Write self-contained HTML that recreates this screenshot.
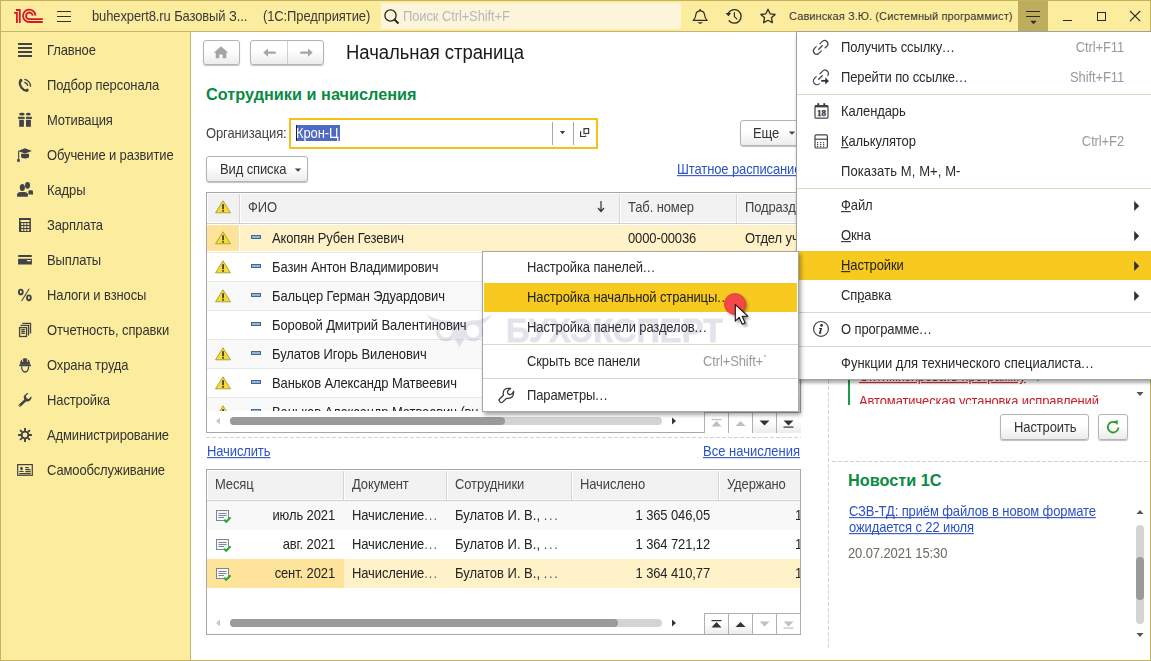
<!DOCTYPE html>
<html><head><meta charset="utf-8">
<style>
*{box-sizing:border-box;margin:0;padding:0}
html,body{width:1151px;height:661px;overflow:hidden;background:#fff;font-family:"Liberation Sans",sans-serif;font-size:13px;color:#333}
.a{position:absolute}
.t{position:absolute;white-space:nowrap;line-height:15px;font-size:13px;letter-spacing:-0.12px;transform:scaleY(1.09);transform-origin:0 12px}
.link{color:#2d52c4;text-decoration:underline;text-decoration-skip-ink:none}
.btn{position:absolute;border:1px solid #b4b4b4;border-radius:3px;background:linear-gradient(#fff 0,#fff 40%,#ececec 100%);box-shadow:0 1px 1px rgba(0,0,0,.25)}
u{text-decoration:underline}
</style></head><body>
<div class="a" style="left:0;top:0;width:1151px;height:661px;overflow:hidden;background:#fff">
<!-- HEADER -->
<div class="a" style="left:0;top:0;width:1151px;height:31px;background:#fbec9e"></div>
<div class="a" style="left:0;top:31px;width:1151px;height:1px;background:#c5b56b"></div>
<svg class="a" style="left:0;top:0" width="60" height="31" viewBox="0 0 60 31">
 <g fill="none" stroke="#d7182a" stroke-width="1.8">
  <path d="M14 12.9H16.9V23"/>
  <path d="M16 10H19.8V23"/>
  <path d="M35.4 15.6A6.2 6.2 0 1 0 29.45 22H42.8"/>
  <path d="M32.6 15.6A3.3 3.3 0 1 0 29.45 19.1H42.8"/>
 </g>
</svg>
<div class="a" style="left:57px;top:11px;width:14px;height:1px;background:#333"></div>
<div class="a" style="left:57px;top:16px;width:14px;height:1px;background:#333"></div>
<div class="a" style="left:57px;top:21px;width:14px;height:1px;background:#333"></div>
<div class="t" style="left:92px;top:9px;color:#3a3a3a">buhexpert8.ru Базовый З...</div>
<div class="t" style="left:263px;top:9px;color:#3a3a3a">(1С:Предприятие)</div>
<!-- search -->
<div class="a" style="left:381px;top:3px;width:300px;height:26px;background:#fcf5da;border-radius:1px"></div>
<svg class="a" style="left:383px;top:8px" width="18" height="18" viewBox="0 0 18 18">
 <circle cx="7.5" cy="7.5" r="5.6" fill="none" stroke="#222" stroke-width="1.3"/>
 <path d="M11.5 11.5L15.5 15.5" stroke="#222" stroke-width="2"/>
</svg>
<div class="t" style="left:403px;top:9px;color:#b8b8c0">Поиск Ctrl+Shift+F</div>
<!-- bell -->
<svg class="a" style="left:690px;top:6px" width="20" height="20" viewBox="0 0 20 20">
 <path d="M3.2 14.4C4.8 13 5.5 11.6 5.8 9C6.1 6.4 7.6 4.9 10.2 4.9C12.8 4.9 14.3 6.4 14.6 9C14.9 11.6 15.6 13 17.2 14.4Z" fill="none" stroke="#2b2b2b" stroke-width="1.2" stroke-linejoin="round"/>
 <path d="M10.2 3V4.9" stroke="#2b2b2b" stroke-width="1.4"/>
 <path d="M7.2 16.3H13.2L10.2 18.1Z" fill="#2b2b2b"/>
</svg>
<!-- history -->
<svg class="a" style="left:724px;top:6px" width="20" height="20" viewBox="0 0 20 20">
 <path d="M4.14 7.53A6.8 6.8 0 1 1 4.73 14.3" fill="none" stroke="#2b2b2b" stroke-width="1.3"/>
 <path d="M1.6 6.9H7.1L4.4 10.2Z" fill="#2b2b2b"/>
 <path d="M10.4 6.2V10.6L13.2 13.4" fill="none" stroke="#2b2b2b" stroke-width="1.2"/>
</svg>
<!-- star -->
<svg class="a" style="left:758px;top:6px" width="20" height="20" viewBox="0 0 20 20">
 <path d="M10 3.3L12.1 7.8L17.1 8.4L13.4 11.7L14.4 16.7L10 14.2L5.6 16.7L6.6 11.7L2.9 8.4L7.9 7.8Z" fill="none" stroke="#2b2b2b" stroke-width="1.3" stroke-linejoin="round"/>
</svg>
<div class="t" style="left:789px;top:10px;font-size:11px;line-height:13px;transform:none;letter-spacing:0.1px;color:#333">Савинская З.Ю. (Системный программист)</div>
<!-- dark button -->
<div class="a" style="left:1018px;top:1px;width:30px;height:30px;background:#bfad5e"></div>
<div class="a" style="left:1026px;top:11px;width:14px;height:1px;background:#2b2b2b"></div>
<div class="a" style="left:1026px;top:16px;width:14px;height:1px;background:#2b2b2b"></div>
<svg class="a" style="left:1030px;top:20px" width="7" height="5" viewBox="0 0 7 5"><path d="M0.3 0.8H6.7L3.5 4.2Z" fill="#2b2b2b"/></svg>
<!-- window controls -->
<div class="a" style="left:1063px;top:20px;width:9px;height:1px;background:#2b2b2b"></div>
<div class="a" style="left:1097px;top:12px;width:9px;height:9px;border:1px solid #2b2b2b"></div>
<svg class="a" style="left:1128px;top:9px" width="14" height="14" viewBox="0 0 14 14"><path d="M2 2L12.2 12.2M12.2 2L2 12.2" stroke="#2b2b2b" stroke-width="1.1"/></svg>

<!-- SIDEBAR -->
<div class="a" style="left:0;top:32px;width:190px;height:629px;background:#fbec9e"></div>
<div class="a" style="left:190px;top:32px;width:1px;height:629px;background:#c5b56b"></div>
<div class="t" style="left:47px;top:43px;color:#333">Главное</div>
<div class="t" style="left:47px;top:78px;color:#333">Подбор персонала</div>
<div class="t" style="left:47px;top:113px;color:#333">Мотивация</div>
<div class="t" style="left:47px;top:148px;color:#333">Обучение и развитие</div>
<div class="t" style="left:47px;top:183px;color:#333">Кадры</div>
<div class="t" style="left:47px;top:218px;color:#333">Зарплата</div>
<div class="t" style="left:47px;top:253px;color:#333">Выплаты</div>
<div class="t" style="left:47px;top:288px;color:#333">Налоги и взносы</div>
<div class="t" style="left:47px;top:323px;color:#333">Отчетность, справки</div>
<div class="t" style="left:47px;top:358px;color:#333">Охрана труда</div>
<div class="t" style="left:47px;top:393px;color:#333">Настройка</div>
<div class="t" style="left:47px;top:428px;color:#333">Администрирование</div>
<div class="t" style="left:47px;top:463px;color:#333">Самообслуживание</div>
<svg class="a" style="left:0;top:0" width="191" height="500" viewBox="0 0 191 500">
<g fill="#424348">
 <rect x="18" y="43" width="14" height="2"/><rect x="18" y="47" width="14" height="2"/><rect x="18" y="51" width="14" height="2"/><rect x="18" y="55" width="14" height="2"/>
</g>
<g fill="none" stroke="#424348">
 <path d="M20.6 80.2C19.4 82.2 19.6 85 21.8 88C23.4 89.9 25.1 91 27.2 90.7" stroke-width="2.2" stroke-linecap="round"/><ellipse cx="20.9" cy="80.6" rx="1.5" ry="1.7" fill="#424348" stroke="none" transform="rotate(-30 20.9 80.6)"/><ellipse cx="26.9" cy="90.2" rx="1.8" ry="1.4" fill="#424348" stroke="none" transform="rotate(-30 26.9 90.2)"/>
 <path d="M24.3 79.4A7.1 7.1 0 0 1 30.6 86.8" stroke-width="1.3"/>
 <path d="M24.3 82.4A4.2 4.2 0 0 1 27.7 86" stroke-width="1.3"/>
</g>
<g fill="#424348">
 <ellipse cx="21.9" cy="114.2" rx="2.8" ry="1.4"/><ellipse cx="28.3" cy="114.2" rx="2.4" ry="1.4"/>
 <rect x="18.1" y="116.8" width="6.6" height="2.1"/><rect x="26" y="116.8" width="5.9" height="2.1"/>
 <rect x="19.2" y="119.8" width="4.7" height="7"/><rect x="26" y="119.8" width="4.9" height="7"/>
 <path d="M17.9 151L25 148.2L31.9 151L25 153.4Z"/>
 <path d="M21.1 153.8H29V156.6C29 158 27.5 158.5 25 158.5C22.6 158.5 21.1 158 21.1 156.6Z"/>
 <rect x="18.1" y="151" width="1.1" height="8.5"/><rect x="17.1" y="159.2" width="2.7" height="2.6"/>
 <ellipse cx="22.35" cy="187.4" rx="2.55" ry="3.5"/>
 <path d="M17.1 196.8V194.5C17.1 192.8 18.5 191.9 20.5 191.9H24.5C26.5 191.9 27.9 192.8 27.9 194.5V196.8Z"/>
 <ellipse cx="27.55" cy="185.4" rx="2.45" ry="3.3"/>
 <path d="M28.4 194.6V191.8C28.4 190.9 28.6 190.2 30 190.2H31.4C32.5 190.2 33 190.9 33 191.8V194.6Z"/>
 <path d="M19 218H30.9V232H19ZM20.5 220V222H29.5V220ZM21.3 223V225H23.3V223ZM24.3 223V225H26.3V223ZM27.3 223V225H29.3V223ZM21.3 226V228H23.3V226ZM24.3 226V228H26.3V226ZM27.3 226V228H29.3V226ZM21.3 229V231H23.3V229ZM24.3 229V231H26.3V229ZM27.3 229V231H29.3V229Z" fill-rule="evenodd"/>
 <rect x="18.1" y="255.1" width="13.8" height="1.8" rx="0.6"/>
 <path d="M18.1 258.7H31.9V264.6H18.1ZM27 260V261.3H30.8V260Z" fill-rule="evenodd"/>
</g>
<g fill="none" stroke="#424348" stroke-width="1.9">
 <ellipse cx="20.8" cy="292" rx="1.9" ry="2.4"/><ellipse cx="28.9" cy="297.8" rx="1.9" ry="2.4"/>
</g>
<path d="M28.6 288.8H29.8L22.2 300.9H21Z" fill="#424348"/>
<g fill="none" stroke="#424348" stroke-width="1.3">
 <rect x="19.6" y="327.6" width="6.9" height="8.9"/>
 <path d="M20.5 325.4H28.5V335.6M22.3 323.4H30.5V333.5"/>
 <path d="M21.3 329.6H24.8M21.3 331.5H24.8M21.3 333.4H24.8"/>
</g>
<g fill="#424348">
 <path d="M20 364.7C20 360.5 22 358.2 25 358.2C28 358.2 30 360.5 30 364.7Z"/>
 <rect x="19.2" y="364.6" width="11.8" height="1.6" rx="0.5"/>
</g>
<path d="M21.6 366.5C21.8 370 23.2 372 25.1 372C27 372 28.4 370 28.6 366.5" fill="none" stroke="#424348" stroke-width="1.3"/>
<g fill="#fbec9e"><rect x="22.2" y="358" width="0.9" height="4"/><rect x="26.9" y="358" width="0.9" height="4"/></g>
<path d="M19.2 404.2L24.3 399.4L23.6 396.2L27 393.1L28.5 393.1L25.8 395.9L26.6 398.2L28.7 398.9L31.3 396.3L31.5 398C31.2 399.4 29.8 401.2 28 401.4L26 401.6L21 406.2C20 407 18.6 406.6 18.4 405.6C18.3 405.1 18.6 404.7 19.2 404.2Z" fill="#424348"/>
<circle cx="19.6" cy="405.3" r="0.55" fill="#fbec9e"/>
<g stroke="#424348" stroke-width="1.9">
 <path d="M25 428.1V431M25 439V441.9M18.1 435H21M29 435H31.9M20.1 430.1L22.2 432.2M27.8 437.8L29.9 439.9M29.9 430.1L27.8 432.2M22.2 437.8L20.1 439.9"/>
</g>
<circle cx="25" cy="435" r="3.35" fill="none" stroke="#424348" stroke-width="1.9"/>
<g fill="none" stroke="#424348" stroke-width="1.2">
 <rect x="17.7" y="464.6" width="14.6" height="10.7"/>
 <path d="M25.3 467.6H28.8M25.3 469.6H30.7M25.3 471.6H30.7M19.3 473.6H30.7M19.3 471.5H23.6"/>
</g>
<ellipse cx="21.5" cy="468.6" rx="1.3" ry="1.8" fill="#424348"/>
</svg>
<!-- MAIN TOP -->
<div class="btn" style="left:203px;top:40px;width:37px;height:25px"></div>
<svg class="a" style="left:211px;top:44px" width="20" height="17" viewBox="0 0 20 17"><path d="M10 2.2L17.3 8.8H15.3V14.3H11.7V10.5H8.3V14.3H4.7V8.8H2.7Z" fill="#a5a5a5"/></svg>
<div class="btn" style="left:250px;top:40px;width:74px;height:25px"></div>
<div class="a" style="left:287px;top:41px;width:1px;height:23px;background:#d0d0d0"></div>
<svg class="a" style="left:260px;top:44px" width="20" height="17" viewBox="0 0 20 17"><path d="M3.2 8.6L8 4.4V7.5H15.7V9.7H8V12.8Z" fill="#a5a5a5"/></svg>
<svg class="a" style="left:296px;top:44px" width="20" height="17" viewBox="0 0 20 17"><path d="M16.8 8.6L12 4.4V7.5H4.3V9.7H12V12.8Z" fill="#a5a5a5"/></svg>
<div class="t" style="left:346px;top:43px;font-size:18.5px;line-height:20px;transform:scaleY(1.06);transform-origin:0 16.4px;letter-spacing:-0.05px;color:#1a1a1a">Начальная страница</div>
<div class="t" style="left:206px;top:85px;font-size:16.3px;line-height:18px;transform:none;letter-spacing:0;font-weight:bold;color:#0a8a44">Сотрудники и начисления</div>
<div class="t" style="left:206px;top:126px;color:#444">Организация:</div>
<div class="a" style="left:289px;top:118px;width:309px;height:31px;border:2px solid #f5c21a;background:#fff"></div>
<div class="a" style="left:296px;top:125px;width:44px;height:16px;background:#5069c4"></div>
<div class="a" style="left:296px;top:125px;width:1px;height:16px;background:#222"></div>
<div class="t" style="left:296px;top:126px;color:#fff">Крон-Ц</div>
<div class="a" style="left:552px;top:122px;width:1px;height:23px;background:#a8a8a8"></div>
<div class="a" style="left:573px;top:122px;width:1px;height:23px;background:#a8a8a8"></div>
<svg class="a" style="left:559px;top:130px" width="8" height="6" viewBox="0 0 8 6"><path d="M0.8 1H6.2L3.5 4.2Z" fill="#444"/></svg>
<svg class="a" style="left:575px;top:123px" width="18" height="18" viewBox="0 0 18 18"><g fill="none" stroke="#3a3a3a" stroke-width="1.2"><rect x="9" y="5.6" width="4.6" height="4.9"/><path d="M5.6 8.3V13.5H10.6V12.5"/></g></svg>
<div class="btn" style="left:740px;top:120px;width:70px;height:26px"></div>
<div class="t" style="left:753px;top:126px;color:#333">Еще</div>
<svg class="a" style="left:788px;top:130px" width="8" height="6" viewBox="0 0 8 6"><path d="M0.8 1.5H7.2L4 4.7Z" fill="#444"/></svg>
<div class="btn" style="left:206px;top:156px;width:102px;height:26px"></div>
<div class="t" style="left:220px;top:162px;color:#333">Вид списка</div>
<svg class="a" style="left:294px;top:167px" width="8" height="6" viewBox="0 0 8 6"><path d="M0.8 1.5H7.2L4 4.7Z" fill="#444"/></svg>
<div class="t link" style="left:677px;top:162px">Штатное расписание</div>

<!-- TABLE 1 -->
<div class="a" style="left:206px;top:192px;width:595px;height:241px;border:1px solid #a8a8a8;background:#fff"></div>
<div class="a" style="left:208px;top:194px;width:592px;height:28px;background:#f2f2f2"></div>
<div class="a" style="left:207px;top:223px;width:593px;height:1px;background:#cfcfcf"></div>
<div class="a" style="left:239px;top:194px;width:1px;height:29px;background:#d6d6d6"></div>
<div class="a" style="left:240px;top:194px;width:1px;height:29px;background:#fff"></div>
<div class="a" style="left:619px;top:194px;width:1px;height:29px;background:#d6d6d6"></div>
<div class="a" style="left:620px;top:194px;width:1px;height:29px;background:#fff"></div>
<div class="a" style="left:736px;top:194px;width:1px;height:29px;background:#d6d6d6"></div>
<div class="a" style="left:737px;top:194px;width:1px;height:29px;background:#fff"></div>
<svg class="a" style="left:215px;top:200px" width="17" height="14" viewBox="0 0 17 14"><path d="M8 0.8L15.5 12.8H0.5Z" fill="#f2dc3a" stroke="#a89a30" stroke-width="0.9" stroke-linejoin="round"/><rect x="7.3" y="4.2" width="1.5" height="5" fill="#222"/><rect x="7.3" y="10.1" width="1.5" height="1.6" fill="#222"/></svg>
<div class="t" style="left:248px;top:200px;color:#444">ФИО</div>
<svg class="a" style="left:596px;top:200px" width="10" height="13" viewBox="0 0 10 13"><path d="M5 1V11M2 8L5 11.5L8 8" fill="none" stroke="#333" stroke-width="1.2"/></svg>
<div class="t" style="left:628px;top:200px;color:#444">Таб. номер</div>
<div class="t" style="left:745px;top:200px;color:#444">Подразделение</div>
<div class="a" style="left:207px;top:224px;width:593px;height:187px;overflow:hidden">
<div class="a" style="left:0;top:1px;width:32px;height:26px;background:#fde49a"></div>
<div class="a" style="left:33px;top:1px;width:560px;height:26px;background:#fff2c9"></div>
<div class="a" style="left:0;top:28px;width:593px;height:1px;background:#e8e8e8"></div>
<svg class="a" style="left:8px;top:7px" width="17" height="14" viewBox="0 0 17 14"><path d="M8 0.8L15.5 12.8H0.5Z" fill="#f2dc3a" stroke="#a89a30" stroke-width="0.9" stroke-linejoin="round"/><rect x="7.3" y="4.2" width="1.5" height="5" fill="#222"/><rect x="7.3" y="10.1" width="1.5" height="1.6" fill="#222"/></svg>
<div class="a" style="left:44px;top:11px;width:10px;height:4px;background:#8fb4d8;border:1px solid #3f6a94"></div>
<div class="t" style="left:65px;top:7px;color:#242424">Акопян Рубен Гезевич</div>
<div class="a" style="left:0;top:29px;width:593px;height:28px;background:#fff"></div>
<div class="a" style="left:0;top:57px;width:593px;height:1px;background:#e8e8e8"></div>
<svg class="a" style="left:8px;top:36px" width="17" height="14" viewBox="0 0 17 14"><path d="M8 0.8L15.5 12.8H0.5Z" fill="#f2dc3a" stroke="#a89a30" stroke-width="0.9" stroke-linejoin="round"/><rect x="7.3" y="4.2" width="1.5" height="5" fill="#222"/><rect x="7.3" y="10.1" width="1.5" height="1.6" fill="#222"/></svg>
<div class="a" style="left:44px;top:40px;width:10px;height:4px;background:#8fb4d8;border:1px solid #3f6a94"></div>
<div class="t" style="left:65px;top:36px;color:#242424">Базин Антон Владимирович</div>
<div class="a" style="left:0;top:58px;width:593px;height:28px;background:#f9f9f9"></div>
<div class="a" style="left:0;top:86px;width:593px;height:1px;background:#e8e8e8"></div>
<svg class="a" style="left:8px;top:65px" width="17" height="14" viewBox="0 0 17 14"><path d="M8 0.8L15.5 12.8H0.5Z" fill="#f2dc3a" stroke="#a89a30" stroke-width="0.9" stroke-linejoin="round"/><rect x="7.3" y="4.2" width="1.5" height="5" fill="#222"/><rect x="7.3" y="10.1" width="1.5" height="1.6" fill="#222"/></svg>
<div class="a" style="left:44px;top:69px;width:10px;height:4px;background:#8fb4d8;border:1px solid #3f6a94"></div>
<div class="t" style="left:65px;top:65px;color:#242424">Бальцер Герман Эдуардович</div>
<div class="a" style="left:0;top:87px;width:593px;height:28px;background:#fff"></div>
<div class="a" style="left:0;top:115px;width:593px;height:1px;background:#e8e8e8"></div>
<div class="a" style="left:44px;top:98px;width:10px;height:4px;background:#8fb4d8;border:1px solid #3f6a94"></div>
<div class="t" style="left:65px;top:94px;color:#242424">Боровой Дмитрий Валентинович</div>
<div class="a" style="left:0;top:116px;width:593px;height:28px;background:#f9f9f9"></div>
<div class="a" style="left:0;top:144px;width:593px;height:1px;background:#e8e8e8"></div>
<svg class="a" style="left:8px;top:123px" width="17" height="14" viewBox="0 0 17 14"><path d="M8 0.8L15.5 12.8H0.5Z" fill="#f2dc3a" stroke="#a89a30" stroke-width="0.9" stroke-linejoin="round"/><rect x="7.3" y="4.2" width="1.5" height="5" fill="#222"/><rect x="7.3" y="10.1" width="1.5" height="1.6" fill="#222"/></svg>
<div class="a" style="left:44px;top:127px;width:10px;height:4px;background:#8fb4d8;border:1px solid #3f6a94"></div>
<div class="t" style="left:65px;top:123px;color:#242424">Булатов Игорь Виленович</div>
<div class="a" style="left:0;top:145px;width:593px;height:28px;background:#fff"></div>
<div class="a" style="left:0;top:173px;width:593px;height:1px;background:#e8e8e8"></div>
<svg class="a" style="left:8px;top:152px" width="17" height="14" viewBox="0 0 17 14"><path d="M8 0.8L15.5 12.8H0.5Z" fill="#f2dc3a" stroke="#a89a30" stroke-width="0.9" stroke-linejoin="round"/><rect x="7.3" y="4.2" width="1.5" height="5" fill="#222"/><rect x="7.3" y="10.1" width="1.5" height="1.6" fill="#222"/></svg>
<div class="a" style="left:44px;top:156px;width:10px;height:4px;background:#8fb4d8;border:1px solid #3f6a94"></div>
<div class="t" style="left:65px;top:152px;color:#242424">Ваньков Александр Матвеевич</div>
<div class="a" style="left:0;top:174px;width:593px;height:28px;background:#f9f9f9"></div>
<div class="a" style="left:0;top:202px;width:593px;height:1px;background:#e8e8e8"></div>
<svg class="a" style="left:8px;top:181px" width="17" height="14" viewBox="0 0 17 14"><path d="M8 0.8L15.5 12.8H0.5Z" fill="#f2dc3a" stroke="#a89a30" stroke-width="0.9" stroke-linejoin="round"/><rect x="7.3" y="4.2" width="1.5" height="5" fill="#222"/><rect x="7.3" y="10.1" width="1.5" height="1.6" fill="#222"/></svg>
<div class="a" style="left:44px;top:185px;width:10px;height:4px;background:#8fb4d8;border:1px solid #3f6a94"></div>
<div class="t" style="left:65px;top:181px;color:#242424">Ваньков Александр Матвеевич (вн. совм.)</div>
<div class="t" style="left:421px;top:7px;color:#242424">0000-00036</div>
<div class="t" style="left:538px;top:7px;color:#242424">Отдел учета</div>
</div>
<svg class="a" style="left:214px;top:416px" width="8" height="10" viewBox="0 0 8 10"><path d="M6 1.5V8.5L2 5Z" fill="#c8c8c8"/></svg>
<div class="a" style="left:230px;top:417px;width:432px;height:8px;border-radius:4px;background:#d4d4d4"></div>
<div class="a" style="left:230px;top:417px;width:275px;height:8px;border-radius:4px;background:#9a9a9a"></div>
<svg class="a" style="left:670px;top:416px" width="8" height="10" viewBox="0 0 8 10"><path d="M2 1.5V8.5L6 5Z" fill="#333"/></svg>
<div class="a" style="left:704px;top:412px;width:97px;height:21px;border:1px solid #b0b0b0;border-bottom:none;background:#fff"></div>
<div class="a" style="left:753px;top:413px;width:24px;height:20px;background:linear-gradient(#fff 40%,#ececec)"></div>
<div class="a" style="left:777px;top:413px;width:24px;height:20px;background:linear-gradient(#fff 40%,#ececec)"></div>
<div class="a" style="left:728px;top:413px;width:1px;height:20px;background:#b0b0b0"></div>
<div class="a" style="left:752px;top:413px;width:1px;height:20px;background:#b0b0b0"></div>
<div class="a" style="left:776px;top:413px;width:1px;height:20px;background:#b0b0b0"></div>
<svg class="a" style="left:705px;top:413px" width="23" height="20" viewBox="0 0 23 20"><rect x="6.5" y="6" width="10" height="1.2" fill="#c0c0c0"/><path d="M6.5 13.5H16.5L11.5 8Z" fill="#c0c0c0"/></svg>
<svg class="a" style="left:729px;top:413px" width="23" height="20" viewBox="0 0 23 20"><path d="M6.5 13H16.5L11.5 8Z" fill="#c0c0c0"/></svg>
<svg class="a" style="left:753px;top:413px" width="23" height="20" viewBox="0 0 23 20"><path d="M6.5 7.5H16.5L11.5 12.5Z" fill="#333"/></svg>
<svg class="a" style="left:777px;top:413px" width="23" height="20" viewBox="0 0 23 20"><path d="M6.5 7.5H16.5L11.5 12.5Z" fill="#333"/><rect x="6.5" y="13.5" width="10" height="1.2" fill="#333"/></svg>
<div class="a" style="left:206px;top:437px;width:595px;height:1px;background:repeating-linear-gradient(90deg,#d2d2d2 0 4px,transparent 4px 6px)"></div>
<div class="t link" style="left:207px;top:444px">Начислить</div>
<div class="t link" style="left:703px;top:444px;letter-spacing:0">Все начисления</div>
<!-- TABLE 2 -->
<div class="a" style="left:206px;top:469px;width:595px;height:166px;border:1px solid #a8a8a8;background:#fff"></div>
<div class="a" style="left:208px;top:471px;width:592px;height:28px;background:#f2f2f2"></div>
<div class="a" style="left:207px;top:500px;width:593px;height:1px;background:#cfcfcf"></div>
<div class="a" style="left:343px;top:471px;width:1px;height:29px;background:#d6d6d6"></div>
<div class="a" style="left:344px;top:471px;width:1px;height:29px;background:#fff"></div>
<div class="a" style="left:446px;top:471px;width:1px;height:29px;background:#d6d6d6"></div>
<div class="a" style="left:447px;top:471px;width:1px;height:29px;background:#fff"></div>
<div class="a" style="left:571px;top:471px;width:1px;height:29px;background:#d6d6d6"></div>
<div class="a" style="left:572px;top:471px;width:1px;height:29px;background:#fff"></div>
<div class="a" style="left:718px;top:471px;width:1px;height:29px;background:#d6d6d6"></div>
<div class="a" style="left:719px;top:471px;width:1px;height:29px;background:#fff"></div>
<div class="t" style="left:215px;top:477px;color:#444">Месяц</div>
<div class="t" style="left:352px;top:477px;color:#444">Документ</div>
<div class="t" style="left:455px;top:477px;color:#444">Сотрудники</div>
<div class="t" style="left:580px;top:477px;color:#444">Начислено</div>
<div class="t" style="left:727px;top:477px;color:#444">Удержано</div>
<div class="a" style="left:207px;top:501px;width:593px;height:110px;overflow:hidden">
<div class="a" style="left:0;top:0;width:593px;height:29px;background:#f8f8f8"></div>
<svg class="a" style="left:8px;top:8px" width="18" height="16" viewBox="0 0 18 16"><rect x="1.5" y="1.5" width="12" height="10" fill="#f4f6f8" stroke="#7c8696" stroke-width="1"/><path d="M3.5 4.5H11.5M3.5 6.5H11.5M3.5 8.5H9" stroke="#7c8696" stroke-width="1"/><path d="M9.2 10.8L11.2 12.8L15.6 8.4" fill="none" stroke="#2aa832" stroke-width="2"/></svg>
<div class="t" style="right:465px;top:7px;color:#242424">июль 2021</div>
<div class="t" style="left:145px;top:7px;color:#242424">Начисление<span style="letter-spacing:1.1px;color:#666">...</span></div>
<div class="t" style="left:248px;top:7px;color:#242424;letter-spacing:0">Булатов И. В., <span style="letter-spacing:1.7px;color:#555">...</span></div>
<div class="t" style="right:90px;top:7px;color:#242424">1 365 046,05</div>
<div class="t" style="left:588px;top:7px;color:#242424">1 000,00</div>
<svg class="a" style="left:8px;top:37px" width="18" height="16" viewBox="0 0 18 16"><rect x="1.5" y="1.5" width="12" height="10" fill="#f4f6f8" stroke="#7c8696" stroke-width="1"/><path d="M3.5 4.5H11.5M3.5 6.5H11.5M3.5 8.5H9" stroke="#7c8696" stroke-width="1"/><path d="M9.2 10.8L11.2 12.8L15.6 8.4" fill="none" stroke="#2aa832" stroke-width="2"/></svg>
<div class="t" style="right:465px;top:36px;color:#242424">авг. 2021</div>
<div class="t" style="left:145px;top:36px;color:#242424">Начисление<span style="letter-spacing:1.1px;color:#666">...</span></div>
<div class="t" style="left:248px;top:36px;color:#242424;letter-spacing:0">Булатов И. В., <span style="letter-spacing:1.7px;color:#555">...</span></div>
<div class="t" style="right:90px;top:36px;color:#242424">1 364 721,12</div>
<div class="t" style="left:588px;top:36px;color:#242424">1 000,00</div>
<div class="a" style="left:0;top:58px;width:137px;height:29px;background:#fde49a"></div>
<div class="a" style="left:137px;top:58px;width:456px;height:29px;background:#fff2c9"></div>
<svg class="a" style="left:8px;top:66px" width="18" height="16" viewBox="0 0 18 16"><rect x="1.5" y="1.5" width="12" height="10" fill="#f4f6f8" stroke="#7c8696" stroke-width="1"/><path d="M3.5 4.5H11.5M3.5 6.5H11.5M3.5 8.5H9" stroke="#7c8696" stroke-width="1"/><path d="M9.2 10.8L11.2 12.8L15.6 8.4" fill="none" stroke="#2aa832" stroke-width="2"/></svg>
<div class="t" style="right:465px;top:65px;color:#242424">сент. 2021</div>
<div class="t" style="left:145px;top:65px;color:#242424">Начисление<span style="letter-spacing:1.1px;color:#666">...</span></div>
<div class="t" style="left:248px;top:65px;color:#242424;letter-spacing:0">Булатов И. В., <span style="letter-spacing:1.7px;color:#555">...</span></div>
<div class="t" style="right:90px;top:65px;color:#242424">1 364 410,77</div>
<div class="t" style="left:588px;top:65px;color:#242424">1 000,00</div>
</div>
<svg class="a" style="left:214px;top:618px" width="8" height="10" viewBox="0 0 8 10"><path d="M6 1.5V8.5L2 5Z" fill="#c8c8c8"/></svg>
<div class="a" style="left:230px;top:619px;width:432px;height:8px;border-radius:4px;background:#d4d4d4"></div>
<div class="a" style="left:230px;top:619px;width:388px;height:8px;border-radius:4px;background:#9a9a9a"></div>
<svg class="a" style="left:670px;top:618px" width="8" height="10" viewBox="0 0 8 10"><path d="M2 1.5V8.5L6 5Z" fill="#333"/></svg>
<div class="a" style="left:704px;top:613px;width:97px;height:21px;border:1px solid #b0b0b0;border-bottom:none;background:#fff"></div>
<div class="a" style="left:705px;top:614px;width:24px;height:20px;background:linear-gradient(#fff 40%,#ececec)"></div>
<div class="a" style="left:729px;top:614px;width:24px;height:20px;background:linear-gradient(#fff 40%,#ececec)"></div>
<div class="a" style="left:728px;top:614px;width:1px;height:20px;background:#b0b0b0"></div>
<div class="a" style="left:752px;top:614px;width:1px;height:20px;background:#b0b0b0"></div>
<div class="a" style="left:776px;top:614px;width:1px;height:20px;background:#b0b0b0"></div>
<svg class="a" style="left:705px;top:614px" width="23" height="20" viewBox="0 0 23 20"><rect x="6.5" y="6" width="10" height="1.2" fill="#333"/><path d="M6.5 13.5H16.5L11.5 8Z" fill="#333"/></svg>
<svg class="a" style="left:729px;top:614px" width="23" height="20" viewBox="0 0 23 20"><path d="M6.5 13H16.5L11.5 8Z" fill="#333"/></svg>
<svg class="a" style="left:753px;top:614px" width="23" height="20" viewBox="0 0 23 20"><path d="M6.5 7.5H16.5L11.5 12.5Z" fill="#c0c0c0"/></svg>
<svg class="a" style="left:777px;top:614px" width="23" height="20" viewBox="0 0 23 20"><path d="M6.5 7.5H16.5L11.5 12.5Z" fill="#c0c0c0"/><rect x="6.5" y="13.5" width="10" height="1.2" fill="#c0c0c0"/></svg>
<!-- RIGHT PANEL -->
<div class="a" style="left:828px;top:32px;width:1px;height:618px;background:repeating-linear-gradient(180deg,#d2d2d2 0 4px,transparent 4px 6px)"></div>
<div class="a" style="left:832px;top:461px;width:318px;height:1px;background:repeating-linear-gradient(90deg,#d2d2d2 0 4px,transparent 4px 6px)"></div>
<div class="a" style="left:848px;top:340px;width:2px;height:65px;background:#1a9a4a"></div>
<div class="a" style="left:859px;top:360px;width:280px;height:44px;overflow:hidden">
 <div class="t" style="left:0;top:9px;color:#c8202a;text-decoration:underline">Оптимизировать программу</div>
 <div class="t" style="left:177px;top:9px;color:#3a5fc8">.</div>
 <div class="t" style="left:0;top:34px;color:#c8202a">Автоматическая установка исправлений</div>
</div>
<svg class="a" style="left:1135px;top:372px" width="10" height="8" viewBox="0 0 10 8"><path d="M1.5 6H8.5L5 2Z" fill="#555"/></svg>
<svg class="a" style="left:1135px;top:390px" width="10" height="8" viewBox="0 0 10 8"><path d="M1.5 2H8.5L5 6Z" fill="#555"/></svg>
<div class="btn" style="left:1000px;top:414px;width:89px;height:26px"></div>
<div class="t" style="left:1014px;top:420px;color:#333">Настроить</div>
<div class="btn" style="left:1098px;top:414px;width:30px;height:26px"></div>
<svg class="a" style="left:1105px;top:419px" width="16" height="16" viewBox="0 0 16 16"><path d="M13.4 8.5A5.3 5.3 0 1 1 10.8 3.6" fill="none" stroke="#2a9d2a" stroke-width="1.8"/><path d="M8.6 2.3L12.9 1.3L12.6 5.9Z" fill="#2a9d2a"/></svg>
<div class="t" style="left:848px;top:471px;font-size:16.3px;line-height:18px;transform:none;letter-spacing:0;font-weight:bold;color:#0a8a44">Новости 1С</div>
<div class="t link" style="left:849px;top:504px">СЗВ-ТД: приём файлов в новом формате</div>
<div class="t link" style="left:849px;top:520px">ожидается с 22 июля</div>
<div class="t" style="left:848px;top:546px;color:#6f6a62">20.07.2021 15:30</div>
<svg class="a" style="left:1135px;top:508px" width="10" height="8" viewBox="0 0 10 8"><path d="M1.5 6H8.5L5 2Z" fill="#555"/></svg>
<div class="a" style="left:1136px;top:525px;width:8px;height:99px;border-radius:4px;background:#d4d4d4"></div>
<div class="a" style="left:1136px;top:557px;width:8px;height:43px;border-radius:4px;background:#9a9a9a"></div>
<svg class="a" style="left:1135px;top:631px" width="10" height="8" viewBox="0 0 10 8"><path d="M1.5 2H8.5L5 6Z" fill="#555"/></svg>

<div class="a" style="left:0;top:0;width:1151px;height:661px;border:1px solid #c3b35e"></div>
<!-- BIG MENU -->
<div class="a" style="left:796px;top:31px;width:360px;height:349px;background:#fff;border:1px solid #a0a0a0;box-shadow:1px 3px 3px rgba(0,0,0,.32)"></div>
<div class="a" style="left:798px;top:251px;width:353px;height:29px;background:#f8c91e"></div>
<div class="t" style="left:841px;top:40px;color:#2a2a2a">Получить ссылку<span style="letter-spacing:0.6px">...</span></div>
<div class="t" style="left:1024px;top:40px;width:100px;text-align:right;color:#9a9a9a">Ctrl+F11</div>
<div class="t" style="left:841px;top:70px;color:#2a2a2a">Перейти по ссылке<span style="letter-spacing:0.6px">...</span></div>
<div class="t" style="left:1024px;top:70px;width:100px;text-align:right;color:#9a9a9a">Shift+F11</div>
<div class="a" style="left:797px;top:94px;width:354px;height:1px;background:#ddd6c2"></div>
<div class="t" style="left:841px;top:104px;color:#2a2a2a">Календарь</div>
<div class="t" style="left:841px;top:134px;color:#2a2a2a"><u>К</u>алькулятор</div>
<div class="t" style="left:1024px;top:134px;width:100px;text-align:right;color:#9a9a9a">Ctrl+F2</div>
<div class="t" style="left:841px;top:164px;color:#2a2a2a"><span style="letter-spacing:0.1px">Показать M, M+, M-</span></div>
<div class="a" style="left:797px;top:188px;width:354px;height:1px;background:#ddd6c2"></div>
<div class="t" style="left:841px;top:198px;color:#2a2a2a"><u>Ф</u>айл</div>
<svg class="a" style="left:1133px;top:200px" width="8" height="12" viewBox="0 0 8 12"><path d="M1.2 1L6.2 6L1.2 11Z" fill="#2c3040"/></svg>
<div class="t" style="left:841px;top:228px;color:#2a2a2a"><u>О</u>кна</div>
<svg class="a" style="left:1133px;top:230px" width="8" height="12" viewBox="0 0 8 12"><path d="M1.2 1L6.2 6L1.2 11Z" fill="#2c3040"/></svg>
<div class="t" style="left:841px;top:258px;color:#222"><u>Н</u>астройки</div>
<svg class="a" style="left:1133px;top:260px" width="8" height="12" viewBox="0 0 8 12"><path d="M1.2 1L6.2 6L1.2 11Z" fill="#2c3040"/></svg>
<div class="t" style="left:841px;top:288px;color:#2a2a2a">Сп<u>р</u>авка</div>
<svg class="a" style="left:1133px;top:290px" width="8" height="12" viewBox="0 0 8 12"><path d="M1.2 1L6.2 6L1.2 11Z" fill="#2c3040"/></svg>
<div class="a" style="left:797px;top:312px;width:354px;height:1px;background:#ddd6c2"></div>
<div class="t" style="left:841px;top:322px;color:#2a2a2a">О программе<span style="letter-spacing:0.6px">...</span></div>
<div class="a" style="left:797px;top:346px;width:354px;height:1px;background:#ddd6c2"></div>
<div class="t" style="left:841px;top:356px;color:#2a2a2a"><span style="letter-spacing:0">Функции для технического специалиста<span style="letter-spacing:0.6px">...</span></span></div>
<svg class="a" style="left:810px;top:37px" width="22" height="52" viewBox="0 0 22 52">
<g fill="none" stroke="#444" stroke-width="1.25">
 <path d="M9.6 7.1L12.37 4.37A3.3 3.3 0 0 1 17.03 9.03L14.77 11.29"/>
 <path d="M6.53 9.41L4.27 11.67A3.3 3.3 0 0 0 8.93 16.33L11.6 13.66"/>
 <path d="M8.3 12.7L12.7 8.3"/>
 <path d="M9.6 37.1L12.37 34.37A3.3 3.3 0 0 1 17.6 38.8"/>
 <path d="M6.53 39.41L4.27 41.67A3.3 3.3 0 0 0 9.7 46.4"/>
 <path d="M8.3 42.7L12.7 38.3"/>
</g>
<path d="M11.2 43.1H15.3V40.3L18.9 43.9L15.3 47.5V44.7H11.2Z" fill="#333"/>
</svg>
<svg class="a" style="left:808px;top:98px" width="26" height="56" viewBox="0 0 26 56">
<g fill="none" stroke="#444" stroke-width="1.2">
 <rect x="7" y="7.6" width="13" height="12.6" rx="1"/>
 <rect x="7" y="36.8" width="12.4" height="13.2" rx="1.2"/>
 <path d="M7 41.2H19.4"/>
</g>
<rect x="7" y="7.2" width="13" height="2.2" fill="#444"/>
<rect x="9.4" y="5.2" width="1.8" height="2.2" fill="#333"/><rect x="15.4" y="5.2" width="1.8" height="2.2" fill="#333"/>
<text x="9" y="18" font-family="Liberation Serif" font-weight="bold" font-size="8.2" fill="#333" stroke="#333" stroke-width=".25" textLength="9" lengthAdjust="spacingAndGlyphs">18</text>
<g fill="#444"><rect x="9" y="44" width="1.2" height="1.2"/><rect x="12" y="44" width="1.2" height="1.2"/><rect x="15" y="44" width="1.2" height="1.2"/><rect x="9" y="46" width="1.2" height="1.2"/><rect x="12" y="46" width="1.2" height="1.2"/><rect x="15" y="46" width="1.2" height="1.2"/><rect x="9" y="48" width="1.2" height="1.2"/><rect x="12" y="48" width="1.2" height="1.2"/><rect x="15" y="48" width="1.2" height="1.2"/></g>
</svg>
<svg class="a" style="left:806px;top:316px" width="28" height="28" viewBox="0 0 28 28">
<circle cx="15" cy="12.9" r="7.4" fill="none" stroke="#444" stroke-width="1.2"/>
<circle cx="15.5" cy="9.4" r="1.4" fill="#333"/>
<path d="M13.2 12.1H16.2L14.8 16.6C14.7 17 15 17 15.6 16.6L15.8 16.9C15 17.6 14.2 17.9 13.6 17.9C13 17.9 12.8 17.5 13 16.8L14.1 13.1L13.1 12.9Z" fill="#333"/>
</svg>
<!-- SUB MENU -->
<div class="a" style="left:482px;top:251px;width:317px;height:161px;background:#fff;border:1px solid #a6a6a6;box-shadow:2px 3px 4px rgba(0,0,0,.35)"></div>
<div class="a" style="left:484px;top:283px;width:313px;height:29px;background:#f8c91e"></div>
<div class="t" style="left:527px;top:260px;color:#2a2a2a">Настройка панелей<span style="letter-spacing:0.6px">...</span></div>
<div class="t" style="left:527px;top:290px;color:#222">Настройка начальной страницы<span style="letter-spacing:0.6px">...</span></div>
<div class="t" style="left:527px;top:320px;color:#2a2a2a">Настройка панели разделов<span style="letter-spacing:0.6px">...</span></div>
<div class="a" style="left:483px;top:344px;width:315px;height:1px;background:#ddd6c2"></div>
<div class="t" style="left:527px;top:354px;color:#2a2a2a">Скрыть все панели</div>
<div class="t" style="left:703px;top:354px;color:#9a9a9a">Ctrl+Shift+`</div>
<div class="a" style="left:483px;top:378px;width:315px;height:1px;background:#ddd6c2"></div>
<div class="t" style="left:527px;top:388px;color:#2a2a2a">Параметры<span style="letter-spacing:0.6px">...</span></div>
<svg class="a" style="left:492px;top:382px" width="28" height="28" viewBox="0 0 28 28"><path d="M7.6 17.0L11.4 13.2C11 11 11.3 8.8 12.5 7.6C13.5 6.6 15 6.3 16.5 6.3L18.6 6.4L16.6 7.9C15.6 8.7 15.4 9.9 15.6 10.7C16 12 17.2 12.7 18.6 12.6C19.8 12.4 20.8 11.3 21.6 9.2C21.8 11.5 21.5 13.5 20 15C19.2 15.8 18.5 16.3 17 16.3L14.6 16.3L10.6 20.1C9.9 20.8 9 20.8 8.3 20.1L7.6 19.4C6.9 18.7 6.9 17.8 7.6 17.0Z" fill="none" stroke="#3a3a3a" stroke-width="1.3" stroke-linejoin="round"/></svg>
<!-- WATERMARK -->
<svg class="a" style="left:420px;top:300px" width="310" height="50" viewBox="420 300 310 50">
<g opacity=".16" fill="#5a5a88">
 <path d="M446 320.5A10.5 10.5 0 1 0 446.01 320.5ZM446 324.7A6.3 6.3 0 1 1 445.99 324.7Z" fill-rule="evenodd"/>
 <path d="M473 320.5A10.5 10.5 0 1 0 473.01 320.5ZM473 324.7A6.3 6.3 0 1 1 472.99 324.7Z" fill-rule="evenodd"/>
 <path d="M426 314.5Q440 322 459.5 322Q479 322 492.3 314.5Q487 322 481 325L473 320.5L459.5 325L446 320.5L437 325Q430 320 426 314.5Z"/>
 <path d="M452.3 324.5H466.7V338H452.3Z"/>
 <path d="M453.5 337H465.5L459.5 347Z"/>
 <text x="506" y="342.3" font-family="Liberation Sans" font-weight="bold" font-size="33" stroke="#5a5a88" stroke-width=".8" textLength="217" lengthAdjust="spacingAndGlyphs">БУХЭКСПЕРТ</text>
</g>
</svg>
<!-- CURSOR -->
<svg class="a" style="left:712px;top:282px" width="50" height="50" viewBox="0 0 50 50">
<defs><filter id="sh" x="-50%" y="-50%" width="200%" height="200%"><feGaussianBlur stdDeviation="1.6"/></filter></defs>
<circle cx="25" cy="24" r="10.6" fill="#000" opacity=".35" filter="url(#sh)"/>
<circle cx="23" cy="22" r="10.6" fill="#f44848" stroke="#d03030" stroke-width=".6"/>
<path d="M25.5 25.5V42L29.5 38L32.5 45L35.5 43.6L32.6 36.8H38.2Z" fill="#000" opacity=".45" filter="url(#sh)"/>
<path d="M23.3 22.6V39.2L27.2 35.4L30.2 42.2L33.1 40.9L30.2 34.2H35.8Z" fill="#fff" stroke="#111" stroke-width="1.1" stroke-linejoin="round"/>
</svg>
</div>
</body></html>
